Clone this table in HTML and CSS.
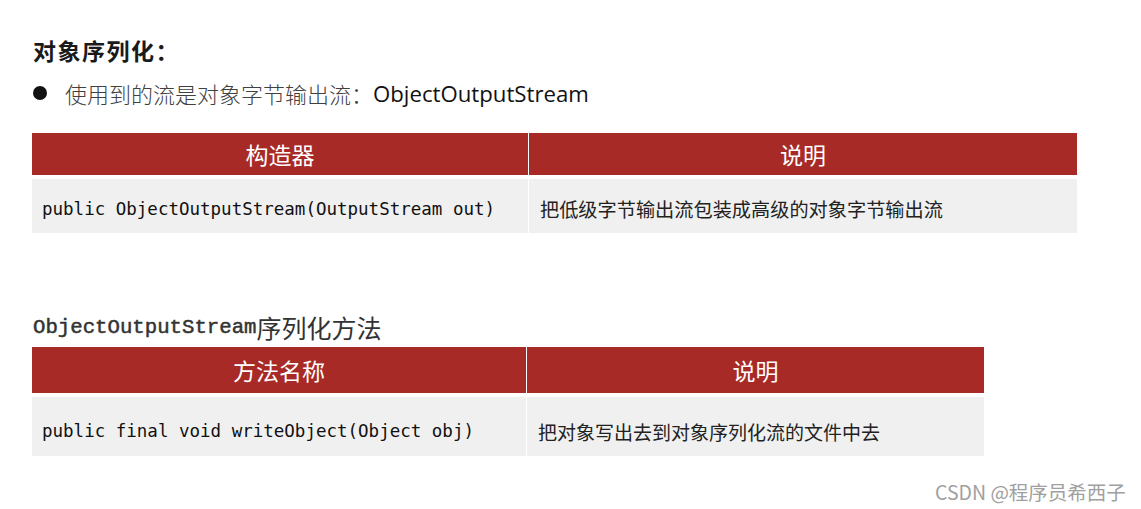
FILE: index.html
```html
<!DOCTYPE html>
<html lang="zh">
<head>
<meta charset="utf-8">
<link rel="stylesheet" href="styles.css">
</head>
<body>
<div class="page">
  <h2 class="heading">对象序列化：</h2>
  <div class="bullet-line">
    <span class="dot"></span>
    <span class="bl-cjk">使用到的流是对象字节输出流：</span><span class="bl-latin">ObjectOutputStream</span>
  </div>

  <div class="table t1">
    <div class="th">构造器</div>
    <div class="th">说明</div>
    <div class="td code">public ObjectOutputStream(OutputStream out)</div>
    <div class="td desc">把低级字节输出流包装成高级的对象字节输出流</div>
  </div>

  <h3 class="subtitle"><span class="st-latin">ObjectOutputStream</span><span class="st-cjk">序列化方法</span></h3>

  <div class="table t2">
    <div class="th">方法名称</div>
    <div class="th">说明</div>
    <div class="td code">public final void writeObject(Object obj)</div>
    <div class="td desc">把对象写出去到对象序列化流的文件中去</div>
  </div>
</div>
<div class="watermark">CSDN @程序员希西子</div>
</body>
</html>
```

FILE: styles.css
```css
* { box-sizing: border-box; }
html, body {
  margin: 0;
  padding: 0;
  background: #ffffff;
}
body {
  width: 1141px;
  height: 509px;
  position: relative;
  overflow: hidden;
  font-family: "Noto Sans CJK SC", sans-serif;
}
.page {
  padding: 35px 0 0 32px;
  display: flex;
  flex-direction: column;
  align-items: flex-start;
}
.heading {
  margin: 0;
  font-size: 23px;
  line-height: 30px;
  font-weight: 700;
  color: #1a1a1a;
  padding-left: 1px;
  letter-spacing: 1.5px;
}
.bullet-line {
  margin-top: 12px;
  height: 32px;
  display: flex;
  align-items: center;
  padding-left: 1px;
}
.dot {
  width: 14px;
  height: 14px;
  border-radius: 50%;
  background: #111;
  margin-right: 18px;
}
.bl-cjk {
  font-size: 22px;
  color: #404040;
  font-weight: 300;
}
.bl-latin {
  font-family: "Open Sans", sans-serif;
  font-size: 22.2px;
  color: #111;
}
.table {
  display: grid;
  column-gap: 1px;
  row-gap: 4px;
}
.t1 {
  margin-top: 24px;
  grid-template-columns: 496px 548px;
  grid-template-rows: 42px 54px;
}
.t2 {
  margin-top: 3px;
  grid-template-columns: 494px 457px;
  grid-template-rows: 46px 59px;
}
.th {
  background: #a82a27;
  color: #ffffff;
  font-size: 23px;
  font-weight: 400;
  display: flex;
  align-items: center;
  justify-content: center;
}
.td {
  background: #f0f0f0;
  display: flex;
  align-items: center;
  padding: 6px 0 0 10px;
}
.t2 .td { padding-top: 9px; }
.code {
  font-family: "DejaVu Sans Mono", monospace;
  font-size: 17.5px;
  color: #111;
}
.desc {
  padding-left: 11px;
  font-size: 19.2px;
  color: #222;
}
.t2 .desc {
  font-size: 19px;
}
.subtitle {
  margin: 77px 0 0 0;
  height: 34px;
  display: flex;
  align-items: center;
  font-weight: 400;
  color: #333;
  padding-left: 1px;
}
.st-latin {
  font-family: "Liberation Mono", monospace;
  font-size: 20.7px;
  font-weight: 400;
  -webkit-text-stroke: 0.5px #333;
}
.st-cjk {
  font-size: 25px;
  font-weight: 400;
}
.watermark {
  position: absolute;
  left: 935px;
  top: 477px;
  font-family: "Noto Sans CJK SC", sans-serif;
  font-size: 19.5px;
  color: #a0a0a0;
  white-space: nowrap;
}
```
